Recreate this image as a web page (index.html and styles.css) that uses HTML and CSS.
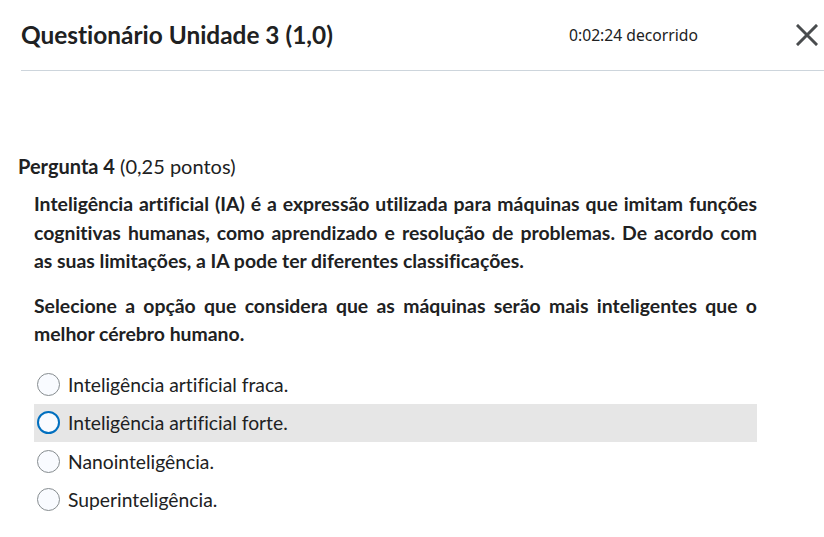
FILE: index.html
```html
<!DOCTYPE html>
<html lang="pt">
<head>
    <meta charset="UTF-8">
    <title>Questionário Unidade 3 (1,0)</title>
    <link rel="stylesheet" href="styles.css">
</head>
<body>
    <!-- Cabeçalho do questionário -->
    <header class="quiz-header">
        <h1 class="quiz-title">Questionário Unidade 3 (1,0)</h1>
        <span class="quiz-timer">0:02:24 decorrido</span>
        <button class="close-button" aria-label="Fechar">
            <svg width="22" height="22" viewBox="0 0 22 22">
                <path d="M2 2 L20 20 M20 2 L2 20" stroke="#494c4e" stroke-width="3" stroke-linecap="square" fill="none"/>
            </svg>
        </button>
    </header>

    <!-- Pergunta -->
    <main class="question">
        <h2 class="question-title"><strong>Pergunta 4</strong> (0,25 pontos)</h2>
        <div class="question-body">
            <p>Inteligência artificial (IA) é a expressão utilizada para máquinas que imitam funções cognitivas humanas, como aprendizado e resolução de problemas. De acordo com <span class="nowrap">as suas</span> limitações, a IA pode ter diferentes classificações.</p>
            <p>Selecione a opção que considera que as máquinas serão mais inteligentes que o melhor cérebro humano.</p>

            <ul class="options">
                <li class="option"><span class="radio"></span>Inteligência artificial fraca.</li>
                <li class="option hover"><span class="radio focus"></span>Inteligência artificial forte.</li>
                <li class="option"><span class="radio"></span>Nanointeligência.</li>
                <li class="option"><span class="radio"></span>Superinteligência.</li>
            </ul>
        </div>
    </main>
</body>
</html>
```

FILE: styles.css
```css
body {
    font-family: Lato, "Noto Sans", sans-serif;
    font-variant-ligatures: none;
    color: #202122;
    background-color: #fff;
    margin: 0;
}
.quiz-header {
    display: flex;
    align-items: center;
    height: 70px;
    margin-left: 21px;
    border-bottom: 1px solid #cdd5dc;
}
.quiz-title {
    flex: 1;
    margin: 0;
    font-size: 24.4px;
    font-weight: 700;
    padding-bottom: 1px;
}
.quiz-timer {
    font-family: "Noto Sans", sans-serif;
    font-size: 15.7px;
    color: #202122;
}
.close-button {
    background: none;
    border: none;
    padding: 0;
    margin-left: 98px;
    margin-right: 6px;
    width: 22px;
    height: 22px;
    cursor: pointer;
}
.close-button svg {
    display: block;
}
.question {
    padding: 83px 0 0 18px;
}
.question-title {
    margin: 0;
    font-size: 20px;
    font-weight: 400;
    line-height: 24px;
}
.question-title strong {
    font-weight: 700;
}
.question-body {
    width: 723px;
    margin: 12px 0 0 16px;
}
.question-body p {
    margin: 0 0 16px;
    font-size: 19.4px;
    font-weight: 700;
    line-height: 28.5px;
    text-align: justify;
}
.nowrap {
    white-space: nowrap;
}
.options {
    list-style: none;
    margin: 17px 0 0;
    padding: 0;
}
.option {
    display: flex;
    align-items: center;
    height: 38.33px;
    padding-left: 3px;
    font-size: 19.3px;
}
.option.hover {
    background-color: #e6e6e6;
}
.radio {
    width: 23px;
    height: 23px;
    margin-right: 8px;
    border: 1px solid #868c8f;
    border-radius: 50%;
    background-color: #f9fbff;
    box-sizing: border-box;
}
.radio.focus {
    border: 2px solid #006fbf;
}
```
